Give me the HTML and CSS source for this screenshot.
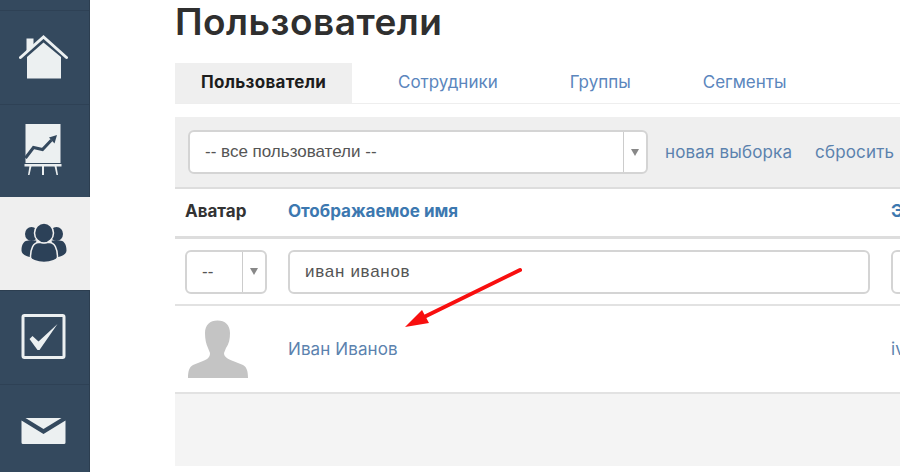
FILE: index.html
```html
<!DOCTYPE html>
<html lang="ru">
<head>
<meta charset="utf-8">
<title>Пользователи</title>
<link rel="stylesheet" href="styles.css">
</head>
<body>
<div class="app">
  <nav class="sidebar">
    <a class="nav-item">
      <svg class="nav-icon" viewBox="19.5 26.5 50 60" width="50" height="60"><path d="M27 38h7v8l-7 6z" fill="#ecf0f1"/><path d="M21 57 44 36.500 67 57" fill="none" stroke="#ecf0f1" stroke-width="3" stroke-linecap="round"/><path d="M27.500 56.500 44 42l17.500 14.500V78h-34z" fill="#ecf0f1"/></svg>
    </a>
    <a class="nav-item">
      <svg class="nav-icon" viewBox="19.5 120 50 60" width="50" height="60"><path d="M26 123h35v39H26z" fill="#ecf0f1"/><path d="M26 157 34 146.500 43 148.500 52 139" fill="none" stroke="#34495e" stroke-width="3"/><path d="M57.500 134 49.500 136.500 55 142.500z" fill="#34495e"/><path d="M25 163h37v2.500H25z" fill="#ecf0f1"/><path d="M42.500 165h2v9h-2zM30 165h2l-2 9h-1.500zM55 165h2l1.500 9H57z" fill="#ecf0f1"/></svg>
    </a>
    <a class="nav-item nav-item-active">
      <svg class="nav-icon" viewBox="19.5 213.500 50 60" width="50" height="60"><g fill="#2c4158"><ellipse cx="31" cy="233.500" rx="6.500" ry="7"/><ellipse cx="56" cy="233.500" rx="6.500" ry="7"/><path d="M21 250c0-7 3-10 7-10h8l-4 17c-6-1-11-3-11-7zM66 250c0-7-3-10-7-10h-8l4 17c6-1 11-3 11-7z"/></g><g fill="#2c4158" stroke="#efefef" stroke-width="1.500"><path d="M30 257c0-9 3-15 8-15h11c5 0 8 6 8 15 0 2-6 5-13.500 5S30 259 30 257z"/><ellipse cx="43.500" cy="232.500" rx="9.500" ry="10"/></g></svg>
    </a>
    <a class="nav-item">
      <svg class="nav-icon" viewBox="19.5 307 50 60" width="50" height="60"><rect x="23.500" y="315.500" width="41" height="42" rx="1.500" fill="none" stroke="#ecf0f1" stroke-width="3"/><path d="M30 339l3-3 6 5.500 19-17.500-18 26h-2z" fill="#ecf0f1"/></svg>
    </a>
    <a class="nav-item">
      <svg class="nav-icon" viewBox="19.5 400 50 60" width="50" height="60"><path d="M22 419.500 44 433 66 419.500V441.500a1.500 1.500 0 0 1-1.500 1.500h-41a1.500 1.500 0 0 1-1.500-1.500z" fill="#ecf0f1"/><path d="M26 417h36l-18 11z" fill="#ecf0f1"/></svg>
    </a>
  </nav>

  <main class="main">
    <h1 class="title">Пользователи</h1>

    <div class="tabs">
      <a class="tab tab-active">Пользователи</a>
      <a class="tab">Сотрудники</a>
      <a class="tab">Группы</a>
      <a class="tab">Сегменты</a>
    </div>

    <div class="toolbar">
      <div class="select select-wide">
        <span class="select-value">-- все пользователи --</span>
        <span class="select-arrow"><i class="caret"></i></span>
      </div>
      <a class="link">новая выборка</a>
      <a class="link">сбросить</a>
    </div>

    <div class="grid row-head">
      <span class="head-dark">Аватар</span>
      <span class="head-link">Отображаемое имя</span>
      <span class="head-link">Эл. почта</span>
    </div>

    <div class="grid row-filter">
      <div class="select select-small">
        <span class="select-value">--</span>
        <span class="select-arrow"><i class="caret"></i></span>
      </div>
      <div class="input">иван иванов</div>
      <div class="input"></div>
    </div>

    <div class="grid row-data">
      <svg class="avatar" viewBox="188 320 60 59" width="60" height="59"><path d="M217.500 320.500C225 320.500 230 325 230 333 230 339 229 344 226 348L224 353C224 357 228 359 233 361L243 365C247 367 248 372 248 378H188C188 372 189 367 193 365L203 361C208 359 210 357 210 353L208 348C206 344 205 339 205 333 205 325 210 320.500 217.500 320.500Z" fill="#c4c4c4"/></svg>
      <a class="name">Иван Иванов</a>
      <a class="name">ivan@example.com</a>
    </div>

    <div class="footer-band"></div>
  </main>

  <svg class="arrow" viewBox="400 265 130 70" width="130" height="70"><path d="M520 270 422 318" fill="none" stroke="#f80f0f" stroke-width="4" stroke-linecap="round"/><path d="M405 327 422 310 429 323z" fill="#f80f0f"/></svg>
</div>
</body>
</html>
```
FILE: styles.css
```css
* { box-sizing: border-box; }
html, body { margin: 0; height: 100%; overflow: hidden; background: #fff; }
body { font-family: Inter, "Liberation Sans", sans-serif; font-size: 17px; color: #333; }
.app { position: relative; display: flex; width: 900px; height: 472px; overflow: hidden; }

.sidebar { flex: 0 0 89.500px; padding-top: 10px; background: #34495e; border-right: 1px solid #2c3e50; }
.nav-item { display: flex; align-items: center; justify-content: center; height: 93.500px; border-top: 1px solid #2e4155; }
.nav-item-active { background: #efefef; border-top: 0; margin-right: -1px; height: 93px; }
.nav-item-active + .nav-item { border-top-color: #2c3e50; }
.nav-icon { display: block; }

.main { flex: 0 0 725px; margin-left: 85.500px; }
.title { margin: 0; height: 63px; font-size: 37px; line-height: 43px; font-weight: 600; letter-spacing: 0.5px; color: #2f2f2f; }

.tabs { display: flex; height: 41px; border-bottom: 1px solid #eee; }
.tab { display: flex; align-items: center; height: 38px; padding: 0 36px; color: #5b86bd; }
.tab-active { justify-content: center; width: 177px; height: 40px; padding: 0 0 2px; margin-right: 10px; background: #efefef; color: #1d1d1d; font-weight: 700; letter-spacing: 0.3px; }

.toolbar { display: flex; align-items: center; height: 72px; margin-top: 13px; padding-left: 13px; background: #efefef; border-bottom: 2px solid #ddd; }
.select { display: flex; flex: none; height: 44px; background: #fff; border: 2px solid #d4d4d4; border-radius: 6px; color: #555; font-family: "Liberation Sans", sans-serif; }
.select-wide { width: 460px; margin-right: 17px; }
.select-small { width: 82px; }
.select-value { flex: 1; display: flex; align-items: center; padding-left: 15px; }
.select-arrow { flex: 0 0 23px; display: flex; align-items: center; justify-content: center; border-left: 1px solid #ccc; }
.caret { width: 0; height: 0; border-left: 4px solid transparent; border-right: 4px solid transparent; border-top: 7px solid #888; }
.link { flex: none; color: #5b82ae; margin-right: 23px; white-space: nowrap; letter-spacing: 0.15px; }

.grid { display: grid; grid-template-columns: 103px 603px 200px; padding-left: 10px; align-items: center; }
.row-head { height: 50px; padding-bottom: 3px; border-bottom: 3px solid #ddd; font-weight: 700; }
.head-dark { color: #333; }
.head-link { color: #3c78b0; white-space: nowrap; }
.row-filter { height: 67px; border-bottom: 2px solid #e2e2e2; }
.input { height: 44px; width: 582px; display: flex; align-items: center; padding-left: 15px; background: #fff; border: 2px solid #d4d4d4; border-radius: 6px; color: #555; font-family: "Liberation Sans", sans-serif; letter-spacing: 0.7px; }
.row-data { height: 88px; border-bottom: 2px solid #e2e2e2; }
.avatar { display: block; margin-left: 3px; }
.name { color: #5b82ae; white-space: nowrap; letter-spacing: 0.1px; }
.footer-band { height: 72px; background: #f4f4f4; }

.arrow { position: absolute; left: 400px; top: 265px; }
```
